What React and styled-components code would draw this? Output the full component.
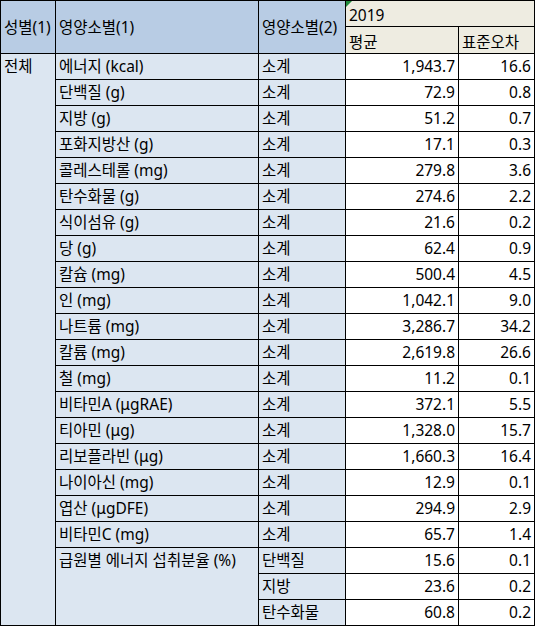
import React from "react";
import styled, { createGlobalStyle } from "styled-components";

const GlobalStyle = createGlobalStyle`
  body {
    margin: 0;
    background: #fff;
    font-family: "Noto Sans", "Noto Sans CJK KR", sans-serif;
  }
`;

const Sheet = styled.table`
  border-collapse: collapse;
  table-layout: fixed;
  width: 534px;
  font-size: 15.5px;
  color: #000;
`;

const Cell = styled.td`
  border: 1px solid #000;
  padding: 0 3px;
  white-space: nowrap;
  overflow: hidden;
  line-height: 19px;
  background: ${(p) => p.bg || "#fff"};
  text-align: ${(p) => (p.num ? "right" : "left")};
  vertical-align: ${(p) => p.valign || "middle"};
  padding-top: ${(p) => (p.valign === "top" ? "3px" : "0")};
`;

const HeadCell = styled(Cell)`
  background: #b8cce4;
`;

const YearCell = styled(Cell)`
  background: #eeece1;
  position: relative;
  vertical-align: bottom;
  padding-bottom: 1px;
`;

const Marker = styled.span`
  position: absolute;
  left: 0;
  top: 0;
  width: 0;
  height: 0;
  border-top: 6px solid #1e8a3c;
  border-right: 6px solid transparent;
`;

const HeadRow = styled.tr`
  height: ${(p) => p.h}px;
`;

const Row = styled.tr`
  height: 26px;
`;

const LABEL_BG = "#dce6f1";

const rows = [
  ["에너지 (kcal)", "소계", "1,943.7", "16.6"],
  ["단백질 (g)", "소계", "72.9", "0.8"],
  ["지방 (g)", "소계", "51.2", "0.7"],
  ["포화지방산 (g)", "소계", "17.1", "0.3"],
  ["콜레스테롤 (mg)", "소계", "279.8", "3.6"],
  ["탄수화물 (g)", "소계", "274.6", "2.2"],
  ["식이섬유 (g)", "소계", "21.6", "0.2"],
  ["당 (g)", "소계", "62.4", "0.9"],
  ["칼슘 (mg)", "소계", "500.4", "4.5"],
  ["인 (mg)", "소계", "1,042.1", "9.0"],
  ["나트륨 (mg)", "소계", "3,286.7", "34.2"],
  ["칼륨 (mg)", "소계", "2,619.8", "26.6"],
  ["철 (mg)", "소계", "11.2", "0.1"],
  ["비타민A (μgRAE)", "소계", "372.1", "5.5"],
  ["티아민 (μg)", "소계", "1,328.0", "15.7"],
  ["리보플라빈 (μg)", "소계", "1,660.3", "16.4"],
  ["나이아신 (mg)", "소계", "12.9", "0.1"],
  ["엽산 (μgDFE)", "소계", "294.9", "2.9"],
  ["비타민C (mg)", "소계", "65.7", "1.4"],
];

const shares = [
  ["단백질", "15.6", "0.1"],
  ["지방", "23.6", "0.2"],
  ["탄수화물", "60.8", "0.2"],
];

export default function App() {
  const total = rows.length + shares.length;
  return (
    <>
      <GlobalStyle />
      <Sheet>
        <colgroup>
          <col style={{ width: 55 }} />
          <col style={{ width: 203 }} />
          <col style={{ width: 87 }} />
          <col style={{ width: 113 }} />
          <col style={{ width: 76 }} />
        </colgroup>
        <tbody>
          <HeadRow h={26}>
            <HeadCell rowSpan={2}>성별(1)</HeadCell>
            <HeadCell rowSpan={2}>영양소별(1)</HeadCell>
            <HeadCell rowSpan={2}>영양소별(2)</HeadCell>
            <YearCell colSpan={2}>
              <Marker />
              2019
            </YearCell>
          </HeadRow>
          <HeadRow h={27}>
            <YearCell>평균</YearCell>
            <YearCell>표준오차</YearCell>
          </HeadRow>
          {rows.map(([name, sub, mean, se], i) => (
            <Row key={name}>
              {i === 0 && (
                <Cell rowSpan={total} bg={LABEL_BG} valign="top">
                  전체
                </Cell>
              )}
              <Cell bg={LABEL_BG}>{name}</Cell>
              <Cell bg={LABEL_BG}>{sub}</Cell>
              <Cell num>{mean}</Cell>
              <Cell num>{se}</Cell>
            </Row>
          ))}
          {shares.map(([sub, mean, se], i) => (
            <Row key={sub}>
              {i === 0 && (
                <Cell rowSpan={shares.length} bg={LABEL_BG} valign="top">
                  급원별 에너지 섭취분율 (%)
                </Cell>
              )}
              <Cell bg={LABEL_BG}>{sub}</Cell>
              <Cell num>{mean}</Cell>
              <Cell num>{se}</Cell>
            </Row>
          ))}
        </tbody>
      </Sheet>
    </>
  );
}
